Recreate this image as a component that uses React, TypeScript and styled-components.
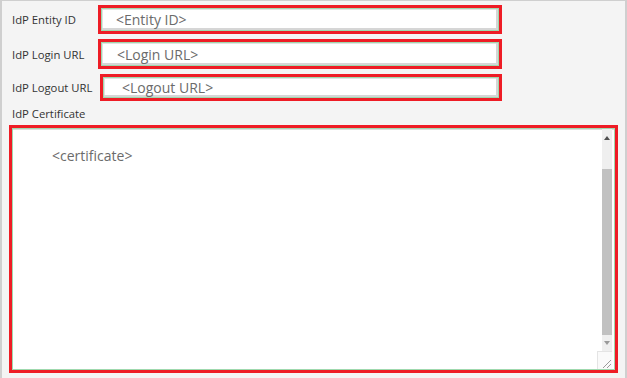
import styled, { createGlobalStyle } from "styled-components";

const GlobalStyle = createGlobalStyle`
  html, body {
    margin: 0;
    padding: 0;
    background: #ffffff;
  }
  body {
    font-family: "Open Sans", "Liberation Sans", sans-serif;
  }
`;

const Frame = styled.div`
  width: 627px;
  height: 378px;
  box-sizing: border-box;
  background: #f4f4f4;
  border-left: 2px solid #cfcfcf;
  border-top: 1px solid #cfcfcf;
  border-right: 2px solid #cfcfcf;
  padding: 4px 0 0 7px;
  display: flex;
  flex-direction: column;
`;

const Row = styled.div<{ h: number; gap: number }>`
  display: flex;
  align-items: center;
  height: ${(p) => p.h}px;
  margin-bottom: ${(p) => p.gap}px;
`;

const Label = styled.div`
  width: 89px;
  padding-left: 3px;
  box-sizing: border-box;
  font-size: 11.3px;
  color: #333333;
  white-space: nowrap;
`;

const RedBox = styled.div<{ shift?: number }>`
  box-sizing: border-box;
  width: ${(p) => 404 - (p.shift || 0)}px;
  height: 100%;
  margin-left: ${(p) => p.shift || 0}px;
  border: 3px solid #ee1c25;
  display: flex;
`;

const Field = styled.div<{ indent: number }>`
  flex: 1;
  box-sizing: border-box;
  background: #ffffff;
  border: 1px solid #9fd9ae;
  box-shadow: inset -2px -2px 0 #d6d6d6, inset 1px 1px 0 #e2e2e2;
  display: flex;
  align-items: center;
  padding-left: ${(p) => p.indent}px;
  font-size: 14px;
  color: #6b6b6b;
`;

const CertLabel = styled(Label)`
  height: 22px;
  display: flex;
  align-items: center;
  margin-top: 1px;
`;

const CertBox = styled.div`
  box-sizing: border-box;
  width: 609px;
  height: 248px;
  margin-top: 1px;
  border: 3px solid #ee1c25;
  display: flex;
`;

const CertInner = styled.div`
  flex: 1;
  display: flex;
  background: #ffffff;
  border: 1px solid #9fd9ae;
  box-shadow: inset 0 1px 0 #dcdcdc;
`;

const CertText = styled.div`
  flex: 1;
  padding: 17px 0 0 39px;
  font-size: 14px;
  color: #6b6b6b;
`;

const ScrollCol = styled.div`
  width: 17px;
  display: flex;
  flex-direction: column;
  align-items: flex-end;
  padding-right: 2px;
  box-sizing: border-box;
`;

const Track = styled.div`
  width: 10px;
  flex: 1;
  background: #efefef;
  display: flex;
  flex-direction: column;
  align-items: center;
`;

const Arrow = styled.div<{ up?: boolean }>`
  width: 0;
  height: 0;
  border-left: 3.5px solid transparent;
  border-right: 3.5px solid transparent;
  ${(p) =>
    p.up
      ? "border-bottom: 4px solid #505050; margin: 7px 0 0;"
      : "border-top: 4px solid #9a9a9a; margin: 6px 0 5px;"}
`;

const Thumb = styled.div`
  width: 10px;
  height: 166px;
  margin-top: 29px;
  background: #c1c1c1;
`;

const Grip = styled.div`
  width: 15px;
  height: 18px;
  background: #fafafa;
  border-left: 1px solid #e4e4e4;
  border-top: 1px solid #e4e4e4;
  box-sizing: border-box;
  display: flex;
  align-items: flex-end;
  justify-content: flex-end;
`;

const fields = [
  { label: "IdP Entity ID", text: "<Entity ID>", h: 29, gap: 5, indent: 14, shift: 0 },
  { label: "IdP Login URL", text: "<Login URL>", h: 30, gap: 5, indent: 15, shift: 0 },
  { label: "IdP Logout URL", text: "<Logout URL>", h: 27, gap: 0, indent: 18, shift: 2 },
];

export default function App() {
  return (
    <>
      <GlobalStyle />
      <Frame>
        {fields.map((f) => (
          <Row key={f.label} h={f.h} gap={f.gap}>
            <Label>{f.label}</Label>
            <RedBox shift={f.shift}>
              <Field indent={f.indent}>{f.text}</Field>
            </RedBox>
          </Row>
        ))}
        <CertLabel>IdP Certificate</CertLabel>
        <CertBox>
          <CertInner>
            <CertText>&lt;certificate&gt;</CertText>
            <ScrollCol>
              <Track>
                <Arrow up />
                <Thumb />
                <Arrow />
              </Track>
              <Grip>
                <svg width="11" height="11" viewBox="0 0 11 11">
                  <path d="M2 10 L10 2 M6 10 L10 6" stroke="#9a9a9a" strokeWidth="1" />
                </svg>
              </Grip>
            </ScrollCol>
          </CertInner>
        </CertBox>
      </Frame>
    </>
  );
}
